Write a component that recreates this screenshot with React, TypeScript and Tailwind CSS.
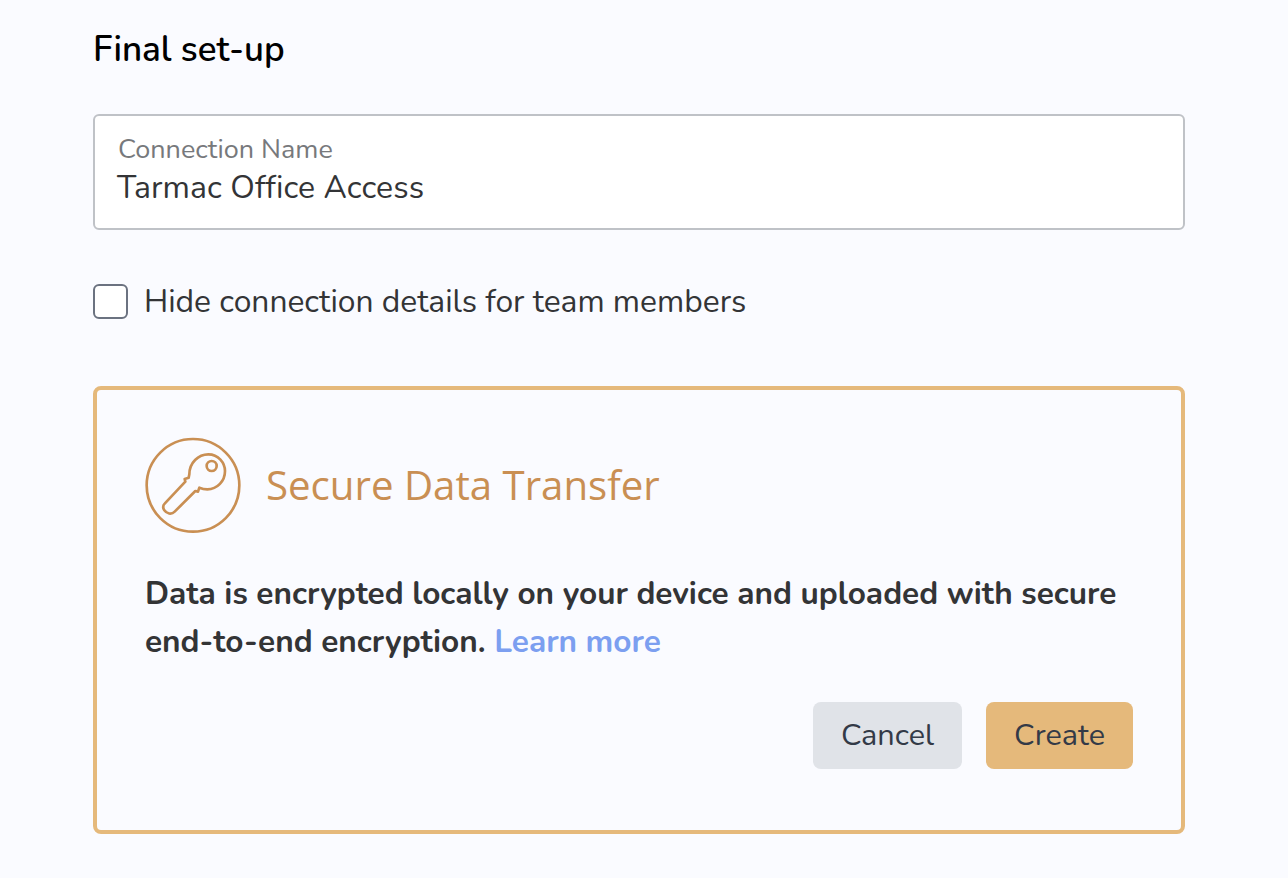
import React from 'react';

const KeyIcon = () => (
  <svg viewBox="45 38 288 288" className="w-24 h-24 shrink-0" fill="none" stroke="#c98f53" strokeWidth="8" strokeLinejoin="round">
    <circle cx="189" cy="183" r="139" />
    <path d="M178 150 C178 115 205 90 235 90 C265 90 285 115 285 140 C285 170 262 195 232 195 C222 195 215 193 208 190 L204 202 L196 200 L134 262 C124 272 110 268 103 258 C98 250 99 243 104 238 L166 172 L164 164 L176 160 Z" />
    <circle cx="245" cy="125" r="15" />
  </svg>
);

export default function App() {
  return (
    <div className="min-h-[878px] bg-[#fafbff] pl-[93px] pr-[103px] pt-[28px] font-['Nunito','Lato','Noto_Sans',sans-serif] text-[#333436]">
      <h1 className="text-[35px] leading-[44px] font-semibold text-black">Final set-up</h1>

      <div className="mt-[42px] h-[116px] rounded-md border-2 border-[#bfc2c7] bg-white pl-[22px] pt-[20px]">
        <div className="pl-[1px] text-[27px] leading-[28px] text-[#77797c]">Connection Name</div>
        <div className="pt-[1px] text-[32px] leading-[46px] tracking-[0.1px]">Tarmac Office Access</div>
      </div>

      <label className="mt-[53px] flex items-center gap-[16px]">
        <span className="h-[35px] w-[35px] rounded-md border-2 border-[#6b7280] bg-white" />
        <span className="pt-[1px] text-[31.8px] leading-[36px]">Hide connection details for team members</span>
      </label>

      <div className="mt-[66px] h-[448px] rounded-lg border-4 border-[#e5b97b] px-[48px] pt-[47px]">
        <div className="flex items-center gap-[25px]">
          <KeyIcon />
          <span className="font-['Open_Sans',sans-serif] text-[40.2px] text-[#c98f53]">Secure Data Transfer</span>
        </div>
        <p className="mt-[37px] text-[31.6px] leading-[48px] font-bold">
          Data is encrypted locally on your device and uploaded with secure end-to-end encryption.{' '}
          <span className="text-[#7c9ff0]">Learn more</span>
        </p>
        <div className="mt-[36px] flex justify-end gap-[24px]">
          <button className="h-[67px] w-[149px] rounded-lg bg-[#e0e3e8] text-[30.7px] text-[#333a47]">Cancel</button>
          <button className="h-[67px] w-[147px] rounded-lg bg-[#e5b97b] text-[30.7px] text-[#333a47]">Create</button>
        </div>
      </div>
    </div>
  );
}
